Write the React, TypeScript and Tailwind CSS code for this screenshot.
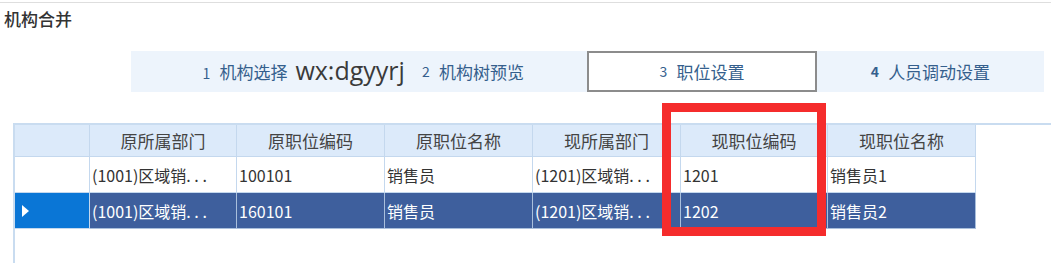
import { Fragment } from "react";

const columns = ["原所属部门", "原职位编码", "原职位名称", "现所属部门", "现职位编码", "现职位名称"];

const rows = [
  ["(1001)区域销. . .", "100101", "销售员", "(1201)区域销. . .", "1201", "销售员1"],
  ["(1001)区域销. . .", "160101", "销售员", "(1201)区域销. . .", "1202", "销售员2"],
];

export default function App() {
  return (
    <div
      className="relative w-[1051px] h-[263px] overflow-hidden bg-white text-[#333]"
      style={{ fontFamily: '"Noto Sans CJK SC", "Noto Sans", sans-serif' }}
    >
      <div className="pt-[2px]">
        <div className="border-t border-[#dedede]" />
      </div>

      {/* Title */}
      <div className="mt-[5px] pl-[4px] h-[22px] text-[17px] leading-[22px] font-medium text-[#333]">
        机构合并
      </div>

      {/* Steps */}
      <div className="mt-[21px] ml-[131px] w-[913px] h-[41px] flex bg-[#edf4fc] text-[17px] text-[#355f8d]">
        <div className="relative w-[228px] flex items-center justify-center">
          <span className="relative">
            <span className="text-[14px] mr-[9px]">1</span>机构选择
            <span
              className="absolute left-[calc(100%+8px)] top-1/2 -translate-y-[55%] text-[25px] text-[#3a3a3a] whitespace-nowrap leading-none"
              style={{ fontFamily: '"Open Sans", "Noto Sans", sans-serif' }}
            >
              wx:dgyyrj
            </span>
          </span>
        </div>
        <div className="w-[228px] flex items-center justify-center">
          <span className="text-[14px] mr-[9px]">2</span>机构树预览
        </div>
        <div className="w-[230px] flex items-center justify-center bg-white border-2 border-[#8c8c8c]">
          <span className="text-[14px] mr-[9px]">3</span>职位设置
        </div>
        <div className="flex-1 flex items-center justify-center">
          <span className="text-[14px] mr-[9px] font-semibold">4</span>人员调动设置
        </div>
      </div>

      {/* Grid */}
      <div className="mt-[31px] ml-[13px] h-[200px] border-l-2 border-t-2 border-[#c9dcf0]">
        <div className="grid grid-cols-[75px_147px_148px_148px_148px_147px_148px] text-[16px]">
          <div className="h-[32px] bg-[#dceafa] border-r border-b border-[#c4d8ee]" />
          {columns.map((c) => (
            <div
              key={c}
              className="h-[32px] bg-[#dceafa] border-r border-b border-[#c4d8ee] flex items-center justify-center text-[17px] text-[#444]"
            >
              {c}
            </div>
          ))}
          {rows.map((r, i) => {
            const sel = i === 1;
            return (
              <Fragment key={i}>
                <div
                  className={
                    sel
                      ? "h-[36px] bg-[#0a76d6] border-r border-b border-[#c4d8ee] flex items-center pl-[7px]"
                      : "h-[36px] bg-white border-r border-b border-[#c4d8ee]"
                  }
                >
                  {sel && (
                    <svg width="7" height="12" viewBox="0 0 7 12">
                      <path d="M0 0 L7 6 L0 12 Z" fill="#fff" />
                    </svg>
                  )}
                </div>
                {r.map((v, j) => (
                  <div
                    key={j}
                    className={
                      sel
                        ? "h-[36px] bg-[#3e5f9d] border-r border-b border-[#a9bfdc] flex items-center pl-[2px] text-white whitespace-nowrap overflow-hidden"
                        : "h-[36px] bg-white border-r border-b border-[#c4d8ee] flex items-center pl-[2px] text-[#333] whitespace-nowrap overflow-hidden"
                    }
                  >
                    {v}
                  </div>
                ))}
              </Fragment>
            );
          })}
        </div>
      </div>

      {/* Highlight box */}
      <div className="absolute left-[662px] top-[103px] w-[164px] h-[133px] border-[9px] border-[#f52c2c]" />
    </div>
  );
}
